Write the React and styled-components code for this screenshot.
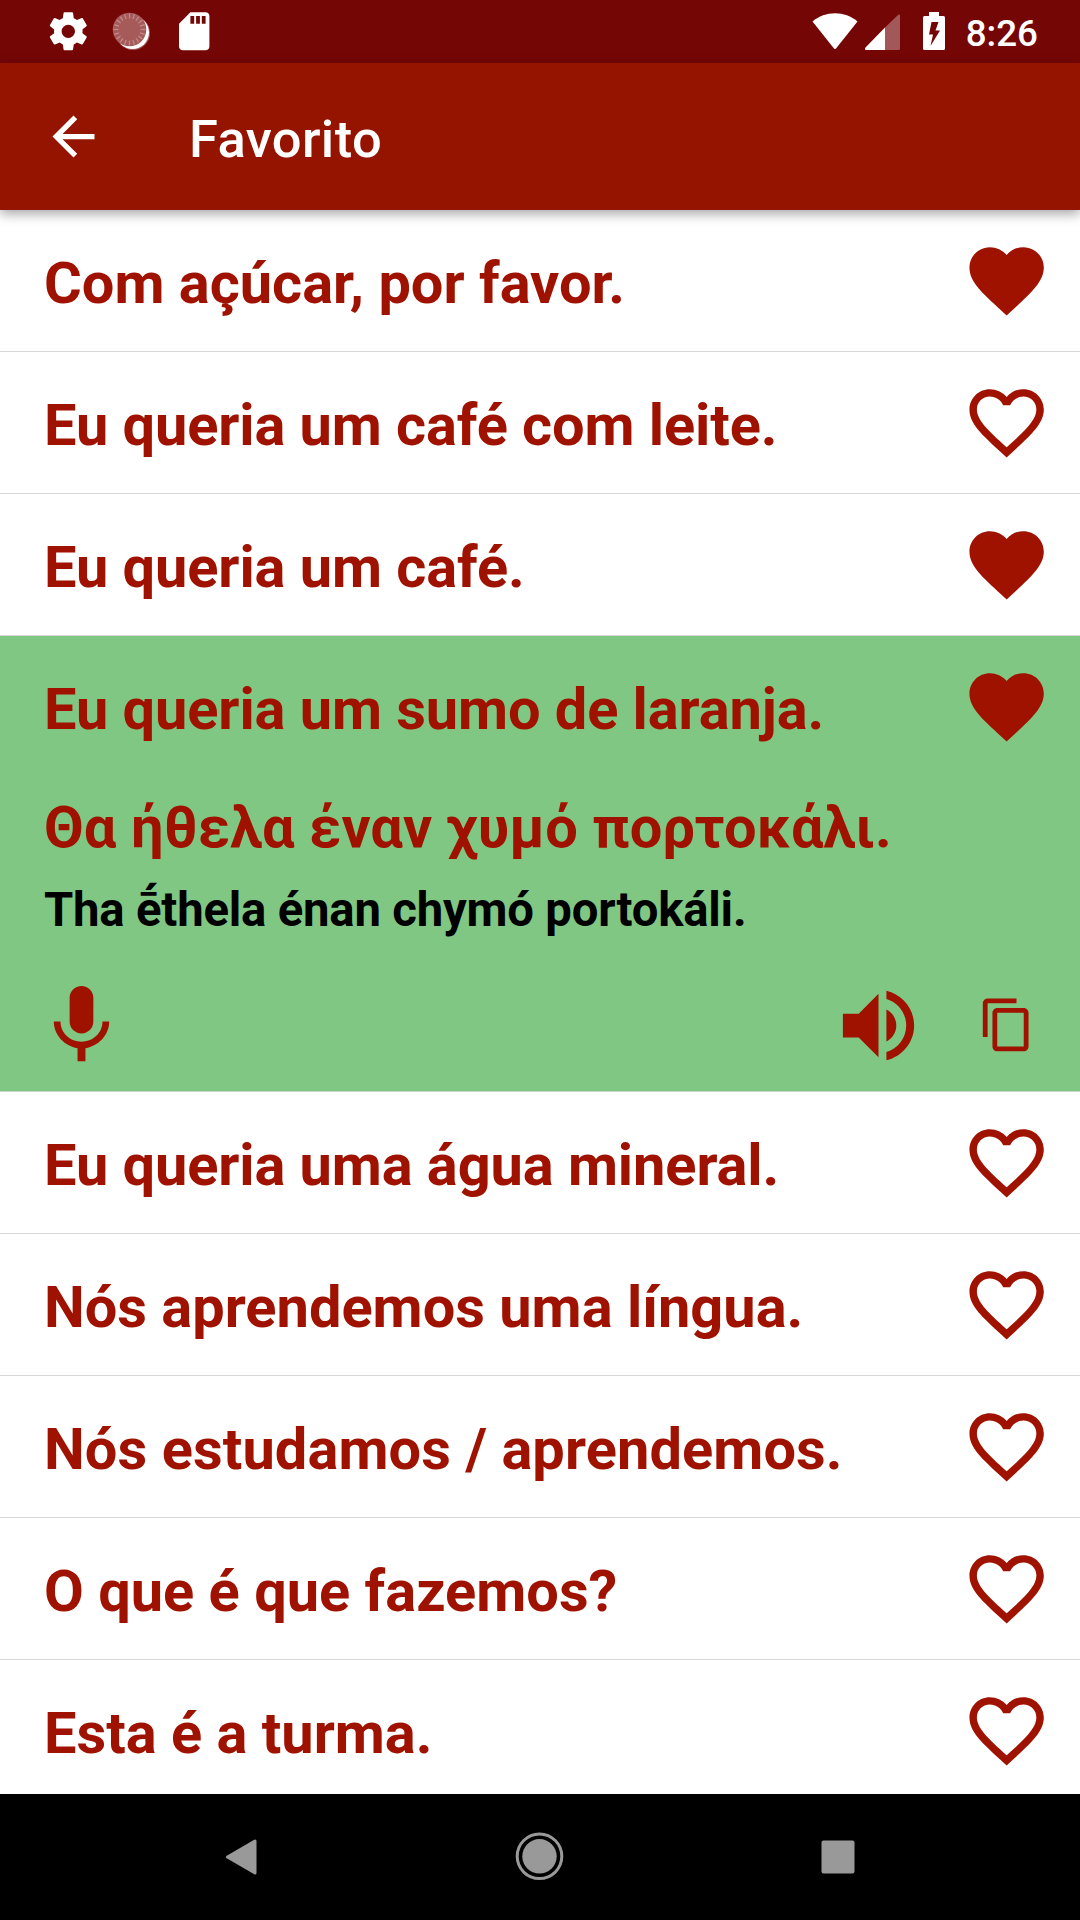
import styled, { createGlobalStyle } from "styled-components";

const GlobalStyle = createGlobalStyle`
  * {
    box-sizing: border-box;
  }
  body {
    margin: 0;
    background-color: #ffffff;
    font-family: Roboto, "Noto Sans", sans-serif;
  }
  svg {
    display: block;
    flex-shrink: 0;
  }
`;

const RED = "#a01200";

// Phone screen: status bar, app bar, list and navigation bar
const Screen = styled.div`
  width: 1080px;
  height: 1920px;
  display: flex;
  flex-direction: column;
  overflow: hidden;
`;

const StatusBar = styled.div`
  height: 63px;
  flex-shrink: 0;
  display: flex;
  justify-content: space-between;
  padding: 0 42px 0 45px;
  background-color: #750606;
  color: #ffffff;
`;

const StatusGroup = styled.div`
  display: flex;
  align-items: center;
`;

const StatusIcon = styled.svg`
  width: ${(p) => p.$w}px;
  height: 63px;
  margin-right: ${(p) => p.$gap || 0}px;
  fill: #ffffff;
`;

const Clock = styled.span`
  padding-top: 4px;
  font-size: 36.75px;
  font-weight: 500;
  line-height: 43px;
`;

const AppBar = styled.header`
  height: 147px;
  flex-shrink: 0;
  display: flex;
  align-items: center;
  padding-left: 42px;
  background-color: #941400;
  color: #ffffff;
  position: relative;
  z-index: 1;
  box-shadow: 0 4px 11px rgba(0, 0, 0, 0.35);
`;

const Title = styled.h1`
  margin: 4px 0 0 84px;
  font-size: 52.5px;
  font-weight: 500;
  letter-spacing: 0.38px;
  line-height: 62px;
`;

const List = styled.ul`
  flex: 1;
  min-height: 0;
  margin: 0;
  padding: 0;
  list-style: none;
  overflow: hidden;
`;

const Item = styled.li`
  height: ${(p) => (p.$open ? 456 : 142)}px;
  border-bottom: 1px solid ${(p) => (p.$open ? "#c5d8c6" : "#d8d8d8")};
  background-color: ${(p) => (p.$open ? "#81c784" : "#ffffff")};
  color: ${RED};
`;

const Row = styled.div`
  height: 141px;
  display: flex;
  align-items: flex-start;
  justify-content: space-between;
  padding: 26px 29px 0 44px;
`;

const Phrase = styled.span`
  padding-top: 13px;
  font-size: 57.75px;
  font-weight: 700;
  letter-spacing: ${(p) => p.$tracking || 0}px;
  line-height: 68px;
  white-space: nowrap;
`;

const Details = styled.div`
  padding: 16px 51px 0 44px;
`;

const Translation = styled.div`
  font-size: 57.75px;
  font-weight: 700;
  letter-spacing: 0.11px;
  line-height: 68px;
`;

const Transliteration = styled.div`
  margin-top: 21px;
  color: #000000;
  font-size: 47.25px;
  font-weight: 700;
  letter-spacing: -0.19px;
  line-height: 56px;
`;

const Actions = styled.div`
  display: flex;
  align-items: center;
  height: 96px;
  margin: 39px 0 0 -11px;
`;

const Icon = styled.svg`
  width: ${(p) => p.$size}px;
  height: ${(p) => p.$size}px;
  margin-left: ${(p) => p.$left || "0"};
  margin-right: ${(p) => p.$right || "0"};
  fill: currentColor;
`;

const NavBar = styled.nav`
  height: 126px;
  flex-shrink: 0;
  background-color: #000000;
  display: flex;
  justify-content: center;

  svg {
    fill: #999999;
    stroke: #999999;
  }
`;

const HEART =
  "M12 21.35l-1.45-1.32C5.4 15.36 2 12.28 2 8.5 2 5.42 4.42 3 7.5 3c1.74 0 3.41.81 4.5 2.09C13.09 3.81 14.76 3 16.5 3 19.58 3 22 5.42 22 8.5c0 3.78-3.4 6.86-8.55 11.54L12 21.35z";
const HEART_BORDER =
  "M16.5 3c-1.74 0-3.41.81-4.5 2.09C10.91 3.81 9.24 3 7.5 3 4.42 3 2 5.42 2 8.5c0 3.78 3.4 6.86 8.55 11.54L12 21.35l1.45-1.32C18.6 15.36 22 12.28 22 8.5 22 5.42 19.58 3 16.5 3zm-4.4 15.55l-.1.1-.1-.1C7.14 14.24 4 11.39 4 8.5 4 6.5 5.5 5 7.5 5c1.54 0 3.04.99 3.57 2.36h1.87C13.46 5.99 14.96 5 16.5 5c2 0 3.5 1.5 3.5 3.5 0 2.89-3.14 5.74-7.9 10.05z";
const BACK = "M20 11H7.83l5.59-5.59L12 4l-8 8 8 8 1.41-1.41L7.83 13H20v-2z";
const MIC =
  "M12 14c1.66 0 2.99-1.34 2.99-3L15 5c0-1.66-1.34-3-3-3S9 3.34 9 5v6c0 1.66 1.34 3 3 3zm5.3-3c0 3-2.54 5.1-5.3 5.1S6.7 14 6.7 11H5c0 3.41 2.72 6.23 6 6.72V21h2v-3.28c3.28-.48 6-3.3 6-6.72h-1.7z";
const VOLUME =
  "M3 9v6h4l5 5V4L7 9H3zm13.5 3c0-1.77-1.02-3.29-2.5-4.03v8.05c1.48-.73 2.5-2.25 2.5-4.02zM14 3.23v2.06c2.89.86 5 3.54 5 6.71s-2.11 5.85-5 6.71v2.06c4.01-.91 7-4.49 7-8.77s-2.99-7.86-7-8.77z";
const COPY =
  "M16 1H4c-1.1 0-2 .9-2 2v14h2V3h12V1zm3 4H8c-1.1 0-2 .9-2 2v14c0 1.1.9 2 2 2h11c1.1 0 2-.9 2-2V7c0-1.1-.9-2-2-2zm0 16H8V7h11v14z";
const GEAR =
  "M19.43 12.98c.04-.32.07-.64.07-.98s-.03-.66-.07-.98l2.11-1.65c.19-.15.24-.42.12-.64l-2-3.46c-.12-.22-.39-.3-.61-.22l-2.49 1c-.52-.4-1.08-.73-1.69-.98l-.38-2.65C14.46 2.18 14.25 2 14 2h-4c-.25 0-.46.18-.49.42l-.38 2.65c-.61.25-1.17.59-1.69.98l-2.49-1c-.23-.09-.49 0-.61.22l-2 3.46c-.13.22-.07.49.12.64l2.11 1.65c-.04.32-.07.65-.07.98s.03.66.07.98l-2.11 1.65c-.19.15-.24.42-.12.64l2 3.46c.12.22.39.3.61.22l2.49-1c.52.4 1.08.73 1.69.98l.38 2.65c.03.24.24.42.49.42h4c.25 0 .46-.18.49-.42l.38-2.65c.61-.25 1.17-.59 1.69-.98l2.49 1c.23.09.49 0 .61-.22l2-3.46c.12-.22.07-.49-.12-.64l-2.11-1.65zM12 15.5c-1.93 0-3.5-1.57-3.5-3.5s1.57-3.5 3.5-3.5 3.5 1.57 3.5 3.5-1.57 3.5-3.5 3.5z";
const SD_CARD =
  "M18 2h-8L4.02 8 4 20c0 1.1.9 2 2 2h12c1.1 0 2-.9 2-2V4c0-1.1-.9-2-2-2zm-6 6h-2V4h2v4zm3 0h-2V4h2v4zm3 0h-2V4h2v4z";

const phrases = [
  { text: "Com açúcar, por favor.", liked: true },
  { text: "Eu queria um café com leite.", tracking: -0.09 },
  { text: "Eu queria um café.", liked: true, tracking: -0.08 },
  {
    text: "Eu queria um sumo de laranja.",
    liked: true,
    tracking: -0.08,
    translation: "Θα ήθελα έναν χυμό πορτοκάλι.",
    latin: "Tha ḗthela énan chymó portokáli.",
  },
  { text: "Eu queria uma água mineral.", tracking: -0.09 },
  { text: "Nós aprendemos uma língua." },
  { text: "Nós estudamos / aprendemos.", tracking: 0.09 },
  { text: "O que é que fazemos?" },
  { text: "Esta é a turma." },
];

const ticks = Array.from({ length: 20 }, (_, i) => i * 18);

const MaterialIcon = ({ path, ...rest }) => (
  <Icon viewBox="0 0 24 24" {...rest}>
    <path d={path} />
  </Icon>
);

const PhraseItem = ({ text, liked, tracking, translation, latin }) => (
  <Item $open={Boolean(translation)}>
    <Row>
      <Phrase $tracking={tracking}>{text}</Phrase>
      <MaterialIcon path={liked ? HEART : HEART_BORDER} $size={89.25} />
    </Row>
    {translation && (
      <Details>
        <Translation>{translation}</Translation>
        <Transliteration>{latin}</Transliteration>
        <Actions>
          <MaterialIcon path={MIC} $size={95} $left="0.5px" />
          <MaterialIcon path={VOLUME} $size={95} $left="auto" />
          <MaterialIcon path={COPY} $size={57.75} $left="52px" $right="-7px" />
        </Actions>
      </Details>
    )}
  </Item>
);

const App = () => {
  return (
    <>
      <GlobalStyle />
      <Screen>
        <StatusBar>
          <StatusGroup>
            <StatusIcon viewBox="0 0 180 63" $w={180}>
              <path transform="translate(.5 8.5) scale(1.9)" d={GEAR} />
              <circle cx="88" cy="33" r="17" fill="#a65a5a" />
              <circle cx="87.5" cy="32.5" r="16.5" />
              <circle cx="84.5" cy="29.5" r="16.8" fill="#a65a5a" />
              {ticks.map((angle) => (
                <path
                  key={angle}
                  d="M84.5 13.5v5"
                  stroke="#c08b8b"
                  strokeWidth="1.2"
                  transform={`rotate(${angle} 84.5 29.5)`}
                />
              ))}
              <path transform="translate(126.4 8.5) scale(1.9)" d={SD_CARD} />
            </StatusIcon>
          </StatusGroup>
          <StatusGroup>
            <StatusIcon viewBox="812 0 46 63" $w={46} $gap={7}>
              <path d="M812.5 21.5C825 10.5 845 10.5 857.5 21.5L836 48.5q-1 1-2 0z" />
            </StatusIcon>
            <StatusIcon viewBox="865 0 35 63" $w={35} $gap={23}>
              <path d="M885 50V27.5L897.5 15.5q2.5-2 2.5 .5V48.5q0 1.5-1.5 1.5z" opacity="0.33" />
              <path d="M885 27.5V50H866q-2-.5-.5-2.5z" />
            </StatusIcon>
            <StatusIcon viewBox="923 0 22 63" $w={22} $gap={21}>
              <path
                fillRule="evenodd"
                d="M929 12h10v4h4.5q1.5 0 1.5 1.5V48.5q0 1.5-1.5 1.5H924.5q-1.5 0-1.5-1.5V17.5q0-1.5 1.5-1.5H929zM931.5 22l-2.5 12.5h4L930.5 46l9.500-15.5h-4.5L938.5 22z"
              />
            </StatusIcon>
            <Clock>8:26</Clock>
          </StatusGroup>
        </StatusBar>

        <AppBar>
          <MaterialIcon path={BACK} $size={63} />
          <Title>Favorito</Title>
        </AppBar>

        <List>
          {phrases.map((phrase) => (
            <PhraseItem key={phrase.text} {...phrase} />
          ))}
        </List>

        <NavBar>
          <svg width="1080" height="126" viewBox="0 0 1080 126">
            <path d="M227.5 63L255 47V79z" strokeWidth="3" strokeLinejoin="round" />
            <circle cx="539.5" cy="62.3" r="17.2" stroke="none" />
            <circle cx="539.5" cy="62.3" r="22.3" fill="none" strokeWidth="3" />
            <rect x="821.5" y="46.5" width="33" height="33" rx="2" stroke="none" />
          </svg>
        </NavBar>
      </Screen>
    </>
  );
};

export default App;
